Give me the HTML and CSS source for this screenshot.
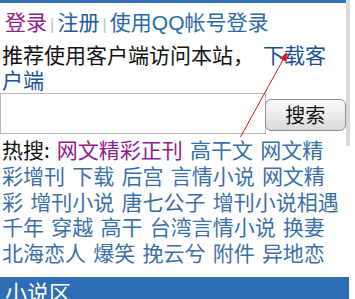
FILE: index.html
```html
<!DOCTYPE html>
<html lang="zh-CN">
<head>
<meta charset="utf-8">
<title>登录</title>
<link rel="stylesheet" href="styles.css">
</head>
<body>
<div class="page">
  <div class="topbox">
    <div class="strip"></div>
    <div class="login">
      <a class="visited" href="#">登录</a><span class="sep">|</span><a class="dark" href="#">注册</a><span class="sep">|</span><a class="mid" href="#">使用QQ帐号登录</a>
    </div>
    <p class="recommend">推荐使用客户端访问本站<span class="comma">，</span><a class="dl" href="#">下载客户端</a></p>
    <form class="search">
      <input class="q" type="text">
      <button class="btn" type="button">搜索</button>
    </form>
  </div>
  <p class="hot"><span class="label">热搜:</span><a class="visited" href="#">网文精彩正刊</a> <a href="#">高干文</a> <a href="#">网文精<br>彩增刊</a> <a href="#">下载</a> <a href="#">后宫</a> <a href="#">言情小说</a> <a href="#">网文精<br>彩</a> <a href="#">增刊小说</a> <a href="#">唐七公子</a> <a href="#">增刊小说相遇</a><br><a href="#">千年</a> <a href="#">穿越</a> <a href="#">高干</a> <a href="#">台湾言情小说</a> <a href="#">换妻</a><br><a href="#">北海恋人</a> <a href="#">爆笑</a> <a href="#">挽云兮</a> <a href="#">附件</a> <a href="#">异地恋</a></p>
  <div class="section">小说区</div>
  <svg class="arrow" width="355" height="299" viewBox="0 0 355 299">
    <line x1="240.5" y1="137" x2="284" y2="58" stroke="#d4141c" stroke-width="1"/>
    <polygon points="287,52 286.5,62 280,58.5" fill="#d4141c"/>
  </svg>
</div>
</body>
</html>
```
FILE: styles.css
```css
html, body {
  margin: 0;
  padding: 0;
  background: #ffffff;
}
body {
  font-family: "Noto Sans CJK SC", "Noto Sans", sans-serif;
  color: #111111;
  text-spacing-trim: space-all;
}
.page {
  position: relative;
  width: 355px;
  height: 299px;
  overflow: hidden;
}
a {
  text-decoration: none;
  color: #3a70a8;
}
a.visited {
  color: #8e2090;
}
.topbox {
  width: 346px;
  border-right: 4px solid #d9d9d9;
  height: 146px;
}
.strip {
  height: 3px;
  background: #2f6fb8;
}
.login {
  font-family: "Liberation Sans", "Noto Sans CJK SC", sans-serif;
  font-size: 21px;
  line-height: 24px;
  padding: 8px 0 0 5px;
  height: 25px;
  white-space: nowrap;
}
.login a.dark {
  color: #1d5c98;
}
.login a.mid {
  color: #2a68a6;
}
.sep {
  color: #c4c4c4;
  font-size: 17px;
  margin: 0 3px;
}
.recommend {
  margin: 0;
  padding: 6px 0 0 2px;
  font-size: 21px;
  line-height: 25px;
}
.comma {
  margin-right: 9px;
}
a.dl {
  color: #1b4f95;
}
.search {
  display: flex;
  align-items: flex-start;
  margin-top: 1px;
}
.q {
  box-sizing: border-box;
  width: 268px;
  height: 41px;
  margin: 0;
  border: 1px solid #b8b8b8;
  background: #ffffff;
}
.btn {
  box-sizing: border-box;
  width: 82px;
  height: 32px;
  margin: 6px 0 0 -1px;
  border: 1px solid #8e8e8e;
  border-radius: 6px;
  background: linear-gradient(#fbfbfb, #dadada);
  font-family: "Noto Sans CJK SC", sans-serif;
  font-size: 20px;
  line-height: 26px;
  color: #111111;
  padding: 0;
  position: relative;
  z-index: 1;
}
.hot {
  margin: -9px 0 0 0;
  width: 353px;
  padding-left: 2px;
  font-size: 21px;
  line-height: 25.75px;
  word-spacing: 2.5px;
  white-space: nowrap;
}
.label {
  margin-right: 7px;
}
.section {
  margin-top: 11px;
  height: 30px;
  width: 349px;
  background: #2f6db4;
  color: #ffffff;
  font-size: 22px;
  line-height: 28px;
  padding: 0 0 0 5px;
  box-sizing: border-box;
}
.arrow {
  position: absolute;
  left: 0;
  top: 0;
  pointer-events: none;
}
```
